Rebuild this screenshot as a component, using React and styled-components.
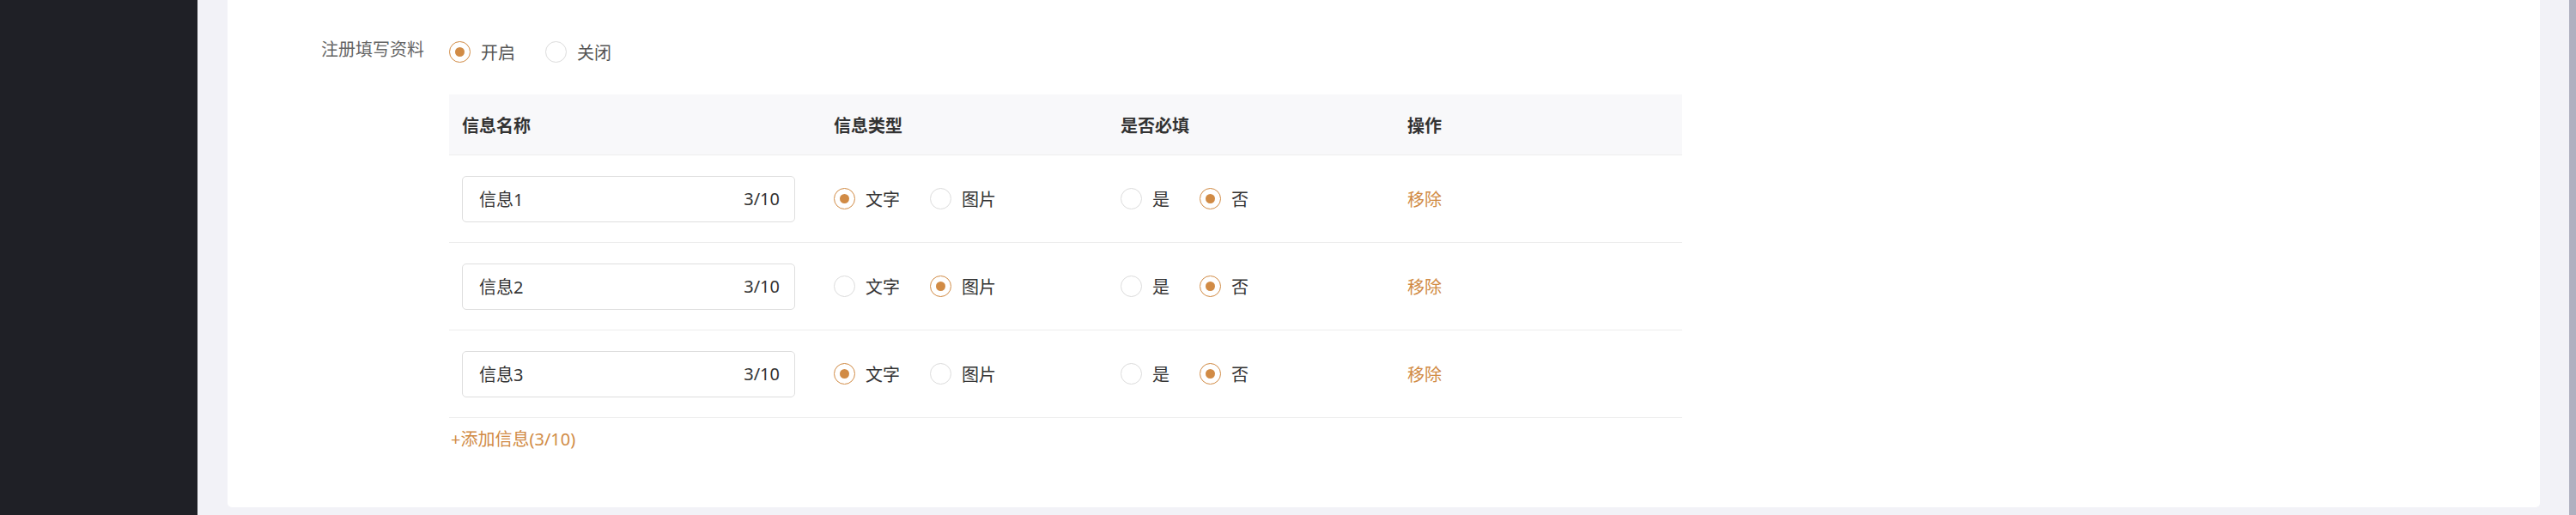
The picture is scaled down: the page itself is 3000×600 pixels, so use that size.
import React, { useState } from 'react';
import styled, { createGlobalStyle } from 'styled-components';

const ORANGE = '#d18b45';

const GlobalStyle = createGlobalStyle`
  body {
    margin: 0;
    font-family: "Noto Sans", "Noto Sans CJK SC", sans-serif;
  }
`;

const Layout = styled.div`
  display: flex;
  height: 600px;
  overflow: hidden;
`;

const Sidebar = styled.div`
  width: 230px;
  background: #1f2026;
`;

const Main = styled.div`
  flex: 1;
  display: flex;
  background: #f2f2f7;
  padding: 0 34px 9px 35px;
`;

const Scrollbar = styled.div`
  width: 8px;
  background: #afb0c0;
`;

const Card = styled.div`
  flex: 1;
  background: #fff;
  border-radius: 0 0 5px 5px;
  padding: 45px 0 0 109px;
`;

const FormItem = styled.div`
  display: flex;
  align-items: flex-start;
`;

const Label = styled.div`
  width: 120px;
  margin-right: 29px;
  font-size: 20px;
  line-height: 26px;
  color: #666;
  white-space: nowrap;
`;

const Content = styled.div`
  display: flex;
  flex-direction: column;
`;

const RadioGroup = styled.div`
  display: flex;
  align-items: center;
  height: 30px;
`;

const RadioItem = styled.label`
  display: flex;
  align-items: center;
  margin-right: 35px;
  font-size: 20px;
  color: ${(p) => p.color || '#333'};
  cursor: pointer;
`;

const Circle = styled.span`
  width: 25px;
  height: 25px;
  box-sizing: border-box;
  border-radius: 50%;
  border: 1px solid ${(p) => (p.checked ? ORANGE : '#dcdcdc')};
  display: flex;
  align-items: center;
  justify-content: center;
  margin-right: 12px;
  background: #fff;

  &::after {
    content: '';
    width: 11px;
    height: 11px;
    border-radius: 50%;
    background: ${ORANGE};
    display: ${(p) => (p.checked ? 'block' : 'none')};
  }
`;

const Table = styled.div`
  width: 1436px;
  margin-top: 35px;
`;

const Grid = styled.div`
  display: grid;
  grid-template-columns: 433px 334px 334px 1fr;
  align-items: center;
  border-bottom: 1px solid #ededed;
`;

const HeadRow = styled(Grid)`
  height: 71px;
  box-sizing: border-box;
  background: #f8f8fa;
`;

const BodyRow = styled(Grid)`
  height: 102px;
  box-sizing: border-box;
`;

const HeadCell = styled.div`
  padding-left: 15px;
  font-size: 20px;
  font-weight: 700;
  color: #333;
`;

const Cell = styled.div`
  padding-left: 15px;
  display: flex;
  align-items: center;
`;

const InputBox = styled.div`
  width: 388px;
  height: 54px;
  box-sizing: border-box;
  border: 1px solid #dedede;
  border-radius: 5px;
  padding: 0 17px 0 19px;
  display: flex;
  align-items: center;
  justify-content: space-between;
  font-size: 20px;
  color: #333;
`;

const LinkText = styled.span`
  color: ${ORANGE};
  font-size: 20px;
  cursor: pointer;
`;

const AddLink = styled.div`
  padding: 10px 0 0 2px;
  line-height: 30px;
  color: ${ORANGE};
  font-size: 20px;
  cursor: pointer;
`;

const Radio = ({ checked, label, color, onClick }) => (
  <RadioItem color={color} onClick={onClick}>
    <Circle checked={checked} />
    {label}
  </RadioItem>
);

const initialRows = [
  { name: '信息1', type: 'text', required: false },
  { name: '信息2', type: 'image', required: false },
  { name: '信息3', type: 'text', required: false },
];

export default function App() {
  const [enabled, setEnabled] = useState(true);
  const [rows, setRows] = useState(initialRows);

  const update = (i, patch) =>
    setRows(rows.map((r, idx) => (idx === i ? { ...r, ...patch } : r)));

  return (
    <>
      <GlobalStyle />
      <Layout>
        <Sidebar />
        <Main>
          <Card>
            <FormItem>
              <Label>注册填写资料</Label>
              <Content>
                <RadioGroup>
                  <Radio color="#555" checked={enabled} label="开启" onClick={() => setEnabled(true)} />
                  <Radio color="#555" checked={!enabled} label="关闭" onClick={() => setEnabled(false)} />
                </RadioGroup>
                <Table>
                  <HeadRow>
                    <HeadCell>信息名称</HeadCell>
                    <HeadCell>信息类型</HeadCell>
                    <HeadCell>是否必填</HeadCell>
                    <HeadCell>操作</HeadCell>
                  </HeadRow>
                  {rows.map((row, i) => (
                    <BodyRow key={i}>
                      <Cell>
                        <InputBox>
                          <span>{row.name}</span>
                          <span>3/10</span>
                        </InputBox>
                      </Cell>
                      <Cell>
                        <Radio checked={row.type === 'text'} label="文字" onClick={() => update(i, { type: 'text' })} />
                        <Radio checked={row.type === 'image'} label="图片" onClick={() => update(i, { type: 'image' })} />
                      </Cell>
                      <Cell>
                        <Radio checked={row.required} label="是" onClick={() => update(i, { required: true })} />
                        <Radio checked={!row.required} label="否" onClick={() => update(i, { required: false })} />
                      </Cell>
                      <Cell>
                        <LinkText>移除</LinkText>
                      </Cell>
                    </BodyRow>
                  ))}
                  <AddLink>+添加信息(3/10)</AddLink>
                </Table>
              </Content>
            </FormItem>
          </Card>
        </Main>
        <Scrollbar />
      </Layout>
    </>
  );
}
